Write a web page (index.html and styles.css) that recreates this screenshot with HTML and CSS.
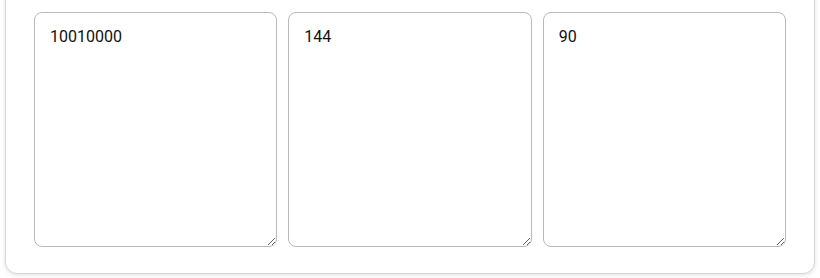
FILE: index.html
```html
<!DOCTYPE html>
<html>
<head>
<meta charset="utf-8">
<link rel="stylesheet" href="styles.css">
</head>
<body>
<div class="page">
  <div class="card">
    <div class="fields">
      <textarea class="field" readonly>10010000</textarea>
      <textarea class="field" readonly>144</textarea>
      <textarea class="field" readonly>90</textarea>
    </div>
  </div>
</div>
</body>
</html>
```

FILE: styles.css
```css
html, body {
  margin: 0;
  padding: 0;
  background: #ffffff;
}
.page {
  padding: 0 5px 5px 5px;
  font-family: Roboto, "Liberation Sans", sans-serif;
}
.card {
  margin-top: -20px;
  padding: 31px 28px 26px 28px;
  background: #ffffff;
  border: 1px solid #d6d6d6;
  border-radius: 12px;
  box-shadow: 0 1px 4px rgba(0, 0, 0, 0.12);
}
.fields {
  display: grid;
  grid-template-columns: 1fr 1fr 1fr;
  gap: 11px;
}
.field {
  box-sizing: border-box;
  height: 235px;
  width: 100%;
  margin: 0;
  padding: 14px 15px;
  border: 1px solid #b8b8b8;
  border-radius: 8px;
  font-family: Roboto, "Liberation Sans", sans-serif;
  font-size: 16px;
  line-height: 20px;
  color: #111111;
  background: #ffffff;
  resize: vertical;
  outline: none;
}
```
